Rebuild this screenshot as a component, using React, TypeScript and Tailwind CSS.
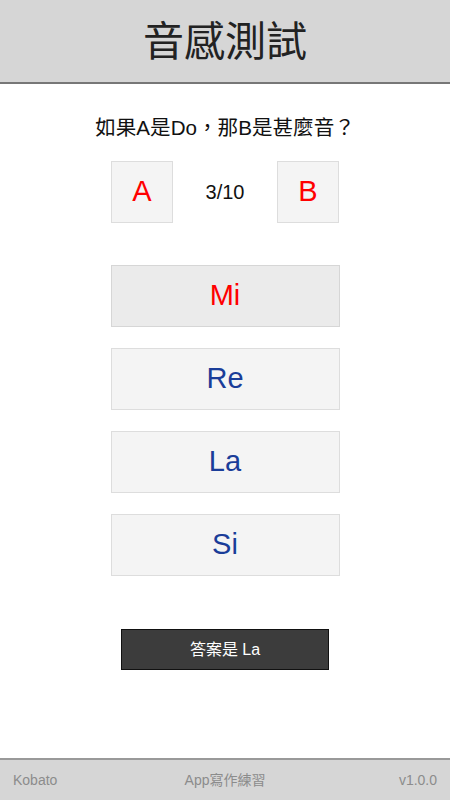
import React from "react";

const font = { fontFamily: '"Liberation Sans", "Noto Sans CJK TC", sans-serif' };

export default function App() {
  const opts = [
    { t: "Mi", sel: true },
    { t: "Re" },
    { t: "La" },
    { t: "Si" },
  ];
  return (
    <div className="w-[450px] h-[800px] flex flex-col bg-white" style={font}>
      <header className="h-[84px] bg-[#d6d6d6] border-b-2 border-[#777777] flex items-center justify-center shrink-0">
        <h1 className="text-[41px] text-[#222222] leading-none pt-[2px]">音感測試</h1>
      </header>
      <main className="flex-1 flex flex-col items-center pt-[30px]">
        <p className="text-[20.6px] leading-[28px] text-[#111111]">如果A是Do，那B是甚麼音？</p>
        <div className="mt-[19px] w-[228px] flex items-center justify-between">
          <div className="w-[62px] h-[62px] bg-[#f4f4f4] border border-[#dddddd] flex items-center justify-center text-[29px] text-[#ff0000]">A</div>
          <div className="text-[20px] text-[#111111]">3/10</div>
          <div className="w-[62px] h-[62px] bg-[#f4f4f4] border border-[#dddddd] flex items-center justify-center text-[29px] text-[#ff0000]">B</div>
        </div>
        <div className="mt-[42px] flex flex-col gap-[21px]">
          {opts.map((o) => (
            <div
              key={o.t}
              className={
                o.sel
                  ? "w-[229px] h-[62px] bg-[#ebebeb] border border-[#d6d6d6] flex items-center justify-center text-[29px] text-[#ff0000]"
                  : "w-[229px] h-[62px] bg-[#f4f4f4] border border-[#dddddd] flex items-center justify-center text-[29px] text-[#1a3d99]"
              }
            >
              {o.t}
            </div>
          ))}
        </div>
        <div className="mt-[53px] w-[208px] h-[41px] bg-[#3c3c3c] border border-[#111111] flex items-center justify-center text-[16px] text-white">
          答案是 La
        </div>
      </main>
      <footer className="h-[42px] bg-[#d6d6d6] border-t-2 border-[#999999] flex items-center px-[13px] text-[14px] text-[#8c8c8c] shrink-0">
        <span className="flex-1">Kobato</span>
        <span>App寫作練習</span>
        <span className="flex-1 text-right">v1.0.0</span>
      </footer>
    </div>
  );
}
